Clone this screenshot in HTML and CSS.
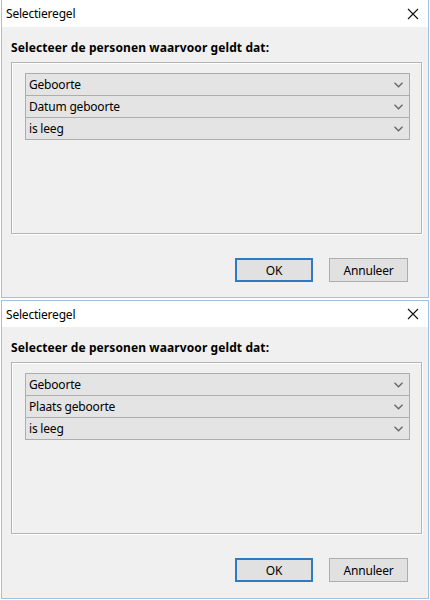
FILE: index.html
```html
<!DOCTYPE html>
<html lang="nl">
<head>
<meta charset="utf-8">
<title>Selectieregel</title>
<link rel="stylesheet" href="styles.css">
</head>
<body>
<div class="dialog first">
  <div class="titlebar">
    <span class="title">Selectieregel</span>
    <svg class="close" width="12" height="12" viewBox="0 0 12 12"><path d="M1 1L11 11M11 1L1 11" stroke="#111" stroke-width="1.1" fill="none"/></svg>
  </div>
  <div class="content">
    <div class="label">Selecteer de personen waarvoor geldt dat:</div>
    <div class="group">
      <div class="select"><span>Geboorte</span><svg class="chev" width="9" height="6" viewBox="0 0 9 6"><path d="M0.5 0.8L4.5 4.8L8.5 0.8" stroke="#666" stroke-width="1.3" fill="none"/></svg></div>
      <div class="select"><span>Datum geboorte</span><svg class="chev" width="9" height="6" viewBox="0 0 9 6"><path d="M0.5 0.8L4.5 4.8L8.5 0.8" stroke="#666" stroke-width="1.3" fill="none"/></svg></div>
      <div class="select"><span>is leeg</span><svg class="chev" width="9" height="6" viewBox="0 0 9 6"><path d="M0.5 0.8L4.5 4.8L8.5 0.8" stroke="#666" stroke-width="1.3" fill="none"/></svg></div>
    </div>
    <div class="buttons">
      <div class="btn default">OK</div>
      <div class="btn">Annuleer</div>
    </div>
  </div>
</div>
<div class="dialog second">
  <div class="titlebar">
    <span class="title">Selectieregel</span>
    <svg class="close" width="12" height="12" viewBox="0 0 12 12"><path d="M1 1L11 11M11 1L1 11" stroke="#111" stroke-width="1.1" fill="none"/></svg>
  </div>
  <div class="content">
    <div class="label">Selecteer de personen waarvoor geldt dat:</div>
    <div class="group">
      <div class="select"><span>Geboorte</span><svg class="chev" width="9" height="6" viewBox="0 0 9 6"><path d="M0.5 0.8L4.5 4.8L8.5 0.8" stroke="#666" stroke-width="1.3" fill="none"/></svg></div>
      <div class="select"><span>Plaats geboorte</span><svg class="chev" width="9" height="6" viewBox="0 0 9 6"><path d="M0.5 0.8L4.5 4.8L8.5 0.8" stroke="#666" stroke-width="1.3" fill="none"/></svg></div>
      <div class="select"><span>is leeg</span><svg class="chev" width="9" height="6" viewBox="0 0 9 6"><path d="M0.5 0.8L4.5 4.8L8.5 0.8" stroke="#666" stroke-width="1.3" fill="none"/></svg></div>
    </div>
    <div class="buttons">
      <div class="btn default">OK</div>
      <div class="btn">Annuleer</div>
    </div>
  </div>
</div>
</body>
</html>
```

FILE: styles.css
```css
html, body {
  margin: 0;
  padding: 0;
  background: #ffffff;
}
body {
  width: 430px;
  height: 600px;
  font-family: "Noto Sans", "Open Sans", "Liberation Sans", sans-serif;
  font-size: 12px;
  color: #000;
}
.dialog {
  box-sizing: border-box;
  margin-left: 1px;
  width: 428px;
  border: 1px solid #9cc3e4;
  background: #f0f0f0;
  display: flex;
  flex-direction: column;
}
.dialog.first {
  height: 298px;
  border-top: none;
  margin-bottom: 2px;
}
.dialog.first .titlebar {
  height: 27px;
}
.dialog.second {
  height: 299px;
}
.titlebar {
  height: 26px;
  background: #ffffff;
  display: flex;
  align-items: center;
  justify-content: space-between;
  padding: 0 9px 0 4px;
  flex: none;
}
.title {
  font-size: 12px;
  letter-spacing: -0.2px;
}
.close {
  display: block;
}
.content {
  flex: 1;
  padding: 0 6px 0 9px;
  display: flex;
  flex-direction: column;
}
.label {
  font-weight: bold;
  font-size: 12px;
  letter-spacing: 0.1px;
  margin-top: 13px;
  height: 22px;
  line-height: 16px;
}
.group {
  box-sizing: border-box;
  height: 172px;
  border: 1px solid #b4b4b4;
  box-shadow: inset 1px 1px 0 #ffffff, 1px 1px 0 #ffffff;
  padding: 10px 11px 0 13px;
  display: flex;
  flex-direction: column;
}
.select {
  box-sizing: border-box;
  height: 23px;
  border: 1px solid #adadad;
  background: #e4e4e4;
  display: flex;
  align-items: center;
  justify-content: space-between;
  padding: 0 6px 0 3px;
  margin-bottom: -1px;
  letter-spacing: -0.2px;
}
.chev {
  display: block;
}
.buttons {
  display: flex;
  justify-content: flex-end;
  gap: 16px;
  margin-top: 24px;
  padding-right: 14px;
}
.btn {
  box-sizing: border-box;
  width: 79px;
  height: 24px;
  border: 1px solid #adadad;
  background: #e1e1e1;
  display: flex;
  align-items: center;
  justify-content: center;
  letter-spacing: -0.2px;
}
.btn.default {
  width: 78px;
  border: 2px solid #2e7bc4;
}
```
